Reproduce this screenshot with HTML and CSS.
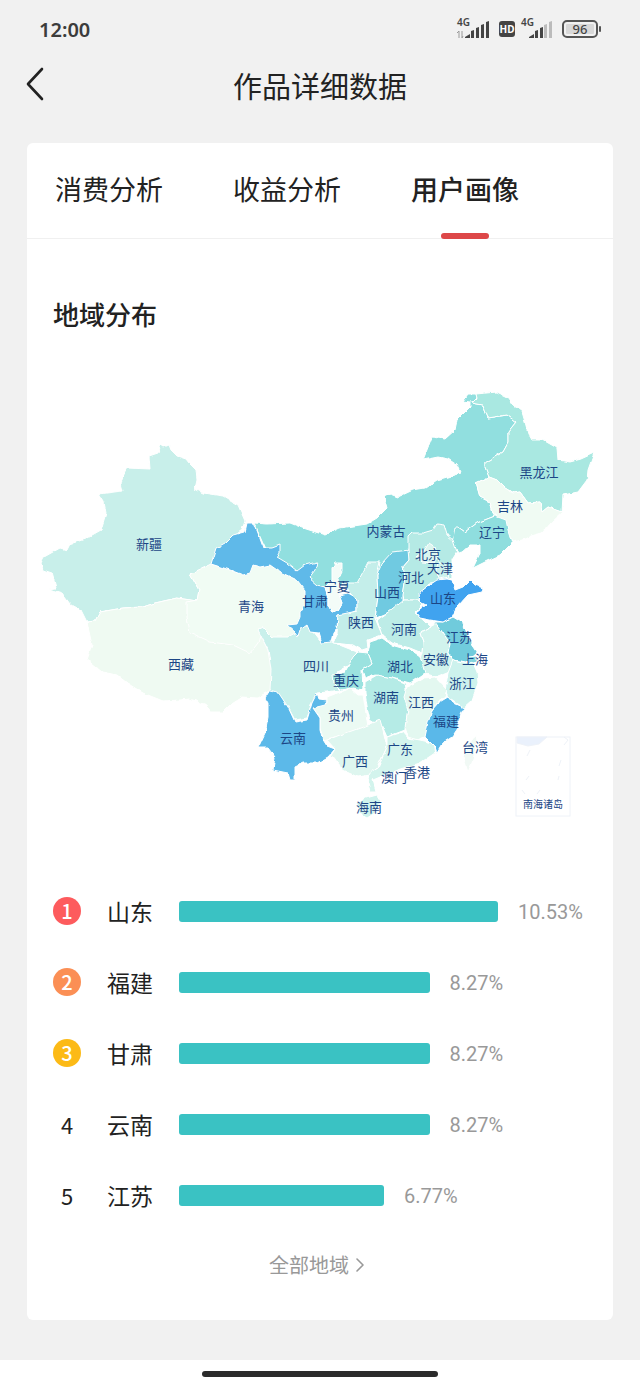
FILE: index.html
```
<!DOCTYPE html>
<html lang="zh-CN">
<head>
    <meta charset="UTF-8">
    <meta name="viewport" content="width=device-width, initial-scale=1.0">
    <title>作品详细数据</title>
    <link rel="stylesheet" href="styles.css">
</head>
<body>
    <div class="status-bar">
        <span class="time">12:00</span>
        <svg class="status-icons" viewBox="0 0 150 28" role="img" aria-label="信号与电量">
            <g class="status-text">
                <text x="1" y="11" font-size="10">4G</text>
                <text x="65" y="11" font-size="10">4G</text>
            </g>
            <path d="M3 23v-7l-2 2M6 16v7l1-2" fill="none" stroke="#999" stroke-width="1"/>
            <path d="M9 23v-1l5-3v4zM15 23v-7l3-1v8zM20 23V13l3-1v11zM25 23v-13l3-1v14zM30 23V7l3-1v17z" fill="#444"/>
            <rect x="43" y="6" width="16" height="16" rx="3" fill="#444"/>
            <text class="hd" x="51" y="18" font-size="10" text-anchor="middle">HD</text>
            <path d="M73 23v-1l5-3v4zM79 23v-7l3-1v8zM84 23V13l3-1v11z" fill="#444"/>
            <path d="M88 23v-13l3-1v14zM93 23V7l3-1v17z" fill="#bbb"/>
            <rect x="107" y="6" width="34" height="16" rx="4" fill="none" stroke="#555" stroke-width="2"/>
            <rect x="110" y="9" width="28" height="10" rx="1" fill="#d8d8d8"/>
            <rect x="143" y="11" width="2" height="6" rx="1" fill="#555"/>
            <text class="battery" x="124" y="19" font-size="13" text-anchor="middle">96</text>
        </svg>
    </div>

    <header class="page-header">
        <button class="back-button" type="button" aria-label="返回">
            <svg viewBox="0 0 20 34"><path d="M17 2 3 17l14 15" fill="none" stroke="#222" stroke-width="2.6" stroke-linecap="round" stroke-linejoin="round"/></svg>
        </button>
        <h1>作品详细数据</h1>
    </header>

    <main class="card">
        <nav class="tabs">
            <button class="tab-button" type="button">消费分析</button>
            <button class="tab-button" type="button">收益分析</button>
            <button class="tab-button active" type="button">用户画像</button>
        </nav>

        <section class="region-section">
            <h2>地域分布</h2>

            <svg class="region-map" viewBox="27 380 586 450" role="img" aria-label="地域分布地图">
                <defs>
                    <!-- roughens the borders a little -->
                    <filter id="rough" x="-2%" y="-2%" width="104%" height="104%">
                        <feTurbulence type="fractalNoise" baseFrequency="0.16" numOctaves="1" seed="4"/>
                        <feDisplacementMap in="SourceGraphic" scale="4" xChannelSelector="R" yChannelSelector="G" result="rough"/>
                        <feGaussianBlur in="rough" stdDeviation="0.35"/>
                    </filter>
                </defs>
                <g class="provinces" filter="url(#rough)">
                    <!-- 内蒙古 -->
                    <path fill="#91dfdf" d="M254 523 267 524 290 523 303 528 325 535 340 528 367 524 377 518 387 508 384 497 390 494 398 497 413 490 425 488 437 480 461 473 457 465 448 459 438 457 423 460 432 437 445 439 455 430 457 420 470 407 470 402 463 401 468 394 476 394 477 398 472 403 483 405 488 418 507 415 516 422 508 432 508 443 503 452 485 463 485 467 489 477 476 483 480 497 490 502 493 513 495 516 477 523 465 532 458 527 453 540 444 550 410 560 390 570 370 575 357 585 343 585 325 590 305 580 287 566 275 557 265 548Z"/>
                    <!-- 黑龙江 -->
                    <path fill="#a9e8e1" d="M476 394 497 392 507 397 513 405 522 412 525 422 528 433 532 440 543 440 557 448 558 460 570 462 581 459 594 453 588 470 587 480 578 492 563 495 562 512 548 507 542 512 540 502 528 503 520 492 513 493 505 488 497 480 489 477 485 467 485 463 503 452 508 443 508 432 516 422 507 415 488 418 483 405 472 403 477 398Z"/>
                    <!-- 吉林 -->
                    <path fill="#f0fbf3" d="M476 483 489 477 497 480 505 488 513 493 520 492 528 503 540 502 542 512 548 507 563 512 552 522 542 533 531 536 522 540 512 542 508 530 498 517 493 513 490 502 480 497Z"/>
                    <!-- 辽宁 -->
                    <path fill="#8fdede" d="M495 516 506 520 508 530 512 543 500 555 485 562 473 568 480 553 480 545 470 545 462 552 458 553 452 543 455 527 458 527 465 532 477 523Z"/>
                    <!-- 新疆 -->
                    <path fill="#c8efea" d="M161 445 164 447 169 445 171 450 177 456 186 459 189 463 196 470 197 480 195 489 203 493 223 496 238 505 245 521 242 530 233 537 225 545 217 548 211 565 190 574 199 590 197 601 177 598 155 603 143 607 123 608 100 612 95 621 87 622 81 610 70 604 62 593 49 589 56 588 52 573 43 570 41 563 44 557 60 548 67 550 70 544 85 539 101 530 106 513 104 502 99 494 122 491 120 483 127 468 150 469 149 456 158 453Z"/>
                    <!-- 西藏 -->
                    <path fill="#effaf2" d="M197 601 177 598 155 603 143 607 123 608 100 612 95 621 87 622 88 627 92 645 87 660 102 672 117 675 127 683 143 693 163 701 180 700 190 699 207 705 210 712 223 712 230 705 243 697 257 698 271 690 272 670 268 650 258 630 240 625Z"/>
                    <!-- 青海 -->
                    <path fill="#f1fcf4" d="M211 564 190 574 199 590 197 601 187 603 187 617 190 633 210 642 233 645 250 653 258 643 262 627 270 637 283 643 292 643 300 632 307 620 305 590 297 580 280 572 270 565 253 565 243 575 230 570Z"/>
                    <!-- 四川 -->
                    <path fill="#c9f0eb" d="M258 630 263 628 272 637 288 637 295 633 302 625 310 627 320 640 332 642 357 652 352 663 337 672 333 683 340 690 327 692 317 693 312 703 307 718 295 720 288 707 278 693 270 690 271 670 268 650Z"/>
                    <!-- 甘肃 -->
                    <path fill="#5fb9e9" d="M211 564 216 548 225 543 233 535 244 532 246 523 254 523 258 533 263 547 272 547 280 544 280 552 277 557 287 563 297 571 305 565 317 562 315 570 309 578 317 585 325 587 328 597 328 605 332 612 338 610 342 603 339 595 348 593 357 598 357 610 347 615 338 615 337 628 333 633 331 642 322 643 319 633 310 632 307 625 300 630 298 636 295 632 287 625 297 624 300 617 300 612 305 605 305 590 297 580 280 572 270 565 260 567 253 565 250 573 243 575 230 570Z"/>
                    <!-- 宁夏 -->
                    <path fill="#f3fcf8" d="M335 563 342 563 342 572 338 580 341 590 339 595 342 603 338 610 332 612 328 605 328 597 325 587 332 580 332 568Z"/>
                    <!-- 陕西 -->
                    <path fill="#c4eeea" d="M368 562 380 562 377 575 378 597 375 618 382 635 367 640 368 648 362 650 353 645 333 643 337 635 338 615 357 611 357 600 350 593 342 583 357 583 363 572Z"/>
                    <!-- 山西 -->
                    <path fill="#70cae1" d="M410 550 392 552 382 563 377 575 378 597 375 618 387 613 402 605 402 597 405 577 403 567 409 560Z"/>
                    <!-- 河北 -->
                    <path fill="#b5eae5" d="M408 550 408 537 412 533 423 533 433 530 437 524 444 525 447 535 453 540 457 552 452 560 452 577 437 582 430 583 420 593 419 600 403 600 402 595 405 577 403 567 409 560Z"/>
                    <!-- 北京 -->
                    <path fill="#dcf6f0" d="M429 543 435 547 438 556 434 563 422 562 417 556 424 551Z"/>
                    <!-- 天津 -->
                    <path fill="#cdf2ed" d="M439 560 446 566 449 577 439 579 436 570Z"/>
                    <!-- 河南 -->
                    <path fill="#bdece7" d="M403 600 418 600 423 605 415 613 423 620 430 627 420 633 423 642 422 653 410 648 392 643 382 635 377 620 387 613Z"/>
                    <!-- 安徽 -->
                    <path fill="#d1f3ed" d="M430 627 437 623 443 633 450 643 448 653 453 662 453 670 447 673 437 677 423 673 420 660 422 653 423 642 420 633Z"/>
                    <!-- 江苏 -->
                    <path fill="#70cbdc" d="M435 622 443 622 453 617 463 623 468 636 473 647 477 653 467 662 453 660 448 653 450 643 443 633Z"/>
                    <!-- 山东 -->
                    <path fill="#3fa3ef" d="M420 602 419 593 428 586 437 580 447 579 452 580 455 590 463 587 470 580 475 585 483 588 482 592 468 595 457 607 452 617 443 622 430 620 420 618 416 613 426 605Z"/>
                    <!-- 浙江 -->
                    <path fill="#cdf2ed" d="M453 660 462 662 473 663 477 672 478 683 472 700 463 708 448 698 445 690 448 673Z"/>
                    <!-- 上海 -->
                    <path fill="#83d4de" d="M468 657 477 656 477 662 469 664Z"/>
                    <!-- 湖北 -->
                    <path fill="#8fdedd" d="M370 642 382 638 392 645 410 650 420 657 425 673 410 683 392 678 375 675 365 679 362 670 372 663 368 653Z"/>
                    <!-- 重庆 -->
                    <path fill="#9be2df" d="M368 653 372 663 362 670 363 690 353 688 340 690 333 683 332 675 345 672 353 657 358 652Z"/>
                    <!-- 湖南 -->
                    <path fill="#b5ebe6" d="M365 682 377 675 392 678 405 683 407 695 408 710 405 730 387 737 383 728 370 720 368 712 365 693Z"/>
                    <!-- 江西 -->
                    <path fill="#e3f8f0" d="M407 687 423 678 435 677 447 690 445 697 438 702 432 710 425 737 417 740 408 737 405 727 408 710 404 697Z"/>
                    <!-- 贵州 -->
                    <path fill="#ebfaf3" d="M313 708 327 703 327 697 340 692 350 688 358 695 363 695 365 707 368 727 350 733 323 740 320 727 320 717Z"/>
                    <!-- 云南 -->
                    <path fill="#5cb9e9" d="M265 698 270 690 278 692 288 707 295 722 307 720 312 703 317 693 319 699 327 700 325 705 313 708 320 718 320 730 322 738 327 746 335 749 328 757 317 763 303 763 295 767 295 780 290 780 288 773 273 770 275 757 268 748 258 748 265 733 268 717 268 703Z"/>
                    <!-- 广西 -->
                    <path fill="#def6ef" d="M327 740 340 735 363 727 380 720 383 730 387 747 377 768 370 775 358 777 342 770 340 763 330 757 335 749Z"/>
                    <!-- 广东 -->
                    <path fill="#d3f4ed" d="M387 737 403 732 408 738 420 740 433 743 435 753 420 763 397 770 373 780 376 791 370 791 368 784 370 773 378 768 387 747Z"/>
                    <!-- 福建 -->
                    <path fill="#5ab8e9" d="M448 697 453 703 464 708 458 720 458 728 452 737 443 743 437 753 435 747 425 737 428 723 432 710 438 703Z"/>
                    <!-- 海南 -->
                    <path fill="#d0f3ed" d="M357 803 366 798 377 795 380 800 375 813 367 818 358 813Z"/>
                    <!-- 台湾 -->
                    <path fill="#f1f9f5" d="M477 735 478 741 472 763 468 772 463 757 468 743Z"/>
                </g>

                <!-- 南海诸岛 -->
                <g class="islands">
                    <rect x="516" y="737" width="54" height="79"/>
                    <path d="M517 737h30l-8 7-11 2-11-3z" fill="#eaf1fc"/>
                    <path d="M564 737l4 3-4 5M530 750l-3 6M529 776l-3 4M561 760l-2 6M559 776l-1 4M540 790l-3 4M522 790l3 4"/>
                </g>

                <g class="province-names">
                    <text x="149" y="549">新疆</text>
                    <text x="181" y="669">西藏</text>
                    <text x="251" y="611">青海</text>
                    <text x="315" y="606">甘肃</text>
                    <text x="337" y="591">宁夏</text>
                    <text x="386" y="536">内蒙古</text>
                    <text x="539" y="477">黑龙江</text>
                    <text x="510" y="511">吉林</text>
                    <text x="492" y="537">辽宁</text>
                    <text x="428" y="559">北京</text>
                    <text x="440" y="573">天津</text>
                    <text x="411" y="582">河北</text>
                    <text x="387" y="597">山西</text>
                    <text x="443" y="603">山东</text>
                    <text x="361" y="627">陕西</text>
                    <text x="404" y="634">河南</text>
                    <text x="459" y="642">江苏</text>
                    <text x="436" y="664">安徽</text>
                    <text x="475" y="664">上海</text>
                    <text x="316" y="671">四川</text>
                    <text x="400" y="671">湖北</text>
                    <text x="346" y="685">重庆</text>
                    <text x="462" y="688">浙江</text>
                    <text x="386" y="702">湖南</text>
                    <text x="421" y="707">江西</text>
                    <text x="341" y="720">贵州</text>
                    <text x="446" y="726">福建</text>
                    <text x="293" y="743">云南</text>
                    <text x="400" y="754">广东</text>
                    <text x="475" y="752">台湾</text>
                    <text x="355" y="766">广西</text>
                    <text x="394" y="782">澳门</text>
                    <text x="417" y="777">香港</text>
                    <text x="369" y="812">海南</text>
                    <text class="small" x="543" y="808">南海诸岛</text>
                </g>
            </svg>

            <ol class="rank-list">
                <li>
                    <span class="rank rank-1">1</span>
                    <span class="name">山东</span>
                    <div class="track"><div class="bar" style="width: 78.6%"></div><span class="value">10.53%</span></div>
                </li>
                <li>
                    <span class="rank rank-2">2</span>
                    <span class="name">福建</span>
                    <div class="track"><div class="bar" style="width: 61.7%"></div><span class="value">8.27%</span></div>
                </li>
                <li>
                    <span class="rank rank-3">3</span>
                    <span class="name">甘肃</span>
                    <div class="track"><div class="bar" style="width: 61.7%"></div><span class="value">8.27%</span></div>
                </li>
                <li>
                    <span class="rank">4</span>
                    <span class="name">云南</span>
                    <div class="track"><div class="bar" style="width: 61.7%"></div><span class="value">8.27%</span></div>
                </li>
                <li>
                    <span class="rank">5</span>
                    <span class="name">江苏</span>
                    <div class="track"><div class="bar" style="width: 50.5%"></div><span class="value">6.77%</span></div>
                </li>
            </ol>

            <a class="all-link" href="#">全部地域
                <svg viewBox="0 0 10 16"><path d="M2 2l6 6-6 6" fill="none" stroke="#999" stroke-width="1.6" stroke-linecap="round" stroke-linejoin="round"/></svg>
            </a>
        </section>
    </main>

    <footer class="home-bar">
        <div class="home-indicator"></div>
    </footer>
</body>
</html>
```
FILE: styles.css
```
* {
    box-sizing: border-box;
}

body {
    margin: 0;
    min-height: 100vh;
    display: flex;
    flex-direction: column;
    font-family: 'Noto Sans CJK SC', sans-serif;
    background-color: #f1f1f1;
    color: #222;
}

button {
    background-color: transparent;
    border: none;
    padding: 0;
    font-family: inherit;
    color: inherit;
    cursor: pointer;
}

.status-bar {
    display: flex;
    justify-content: space-between;
    align-items: center;
    height: 58px;
    padding: 0 34px 0 39px;
}

.time {
    font-family: 'Noto Sans', sans-serif;
    font-size: 20px;
    font-weight: 600;
    color: #3c3c3c;
}

.status-icons {
    width: 150px;
    height: 28px;
}

.status-icons text {
    font-family: 'Noto Sans', sans-serif;
    font-weight: 600;
    fill: #444;
}

.status-icons .battery {
    font-weight: 500;
}

.status-icons .hd {
    fill: #fff;
    font-weight: 700;
}

.page-header {
    display: grid;
    grid-template-columns: 20px 1fr 20px;
    align-items: center;
    height: 57px;
    margin-bottom: 28px;
    padding: 0 25px;
}

.back-button svg {
    display: block;
    width: 20px;
    height: 34px;
    margin-bottom: 6px;
}

h1 {
    margin: 0;
    padding-bottom: 4px;
    font-size: 29px;
    font-weight: 400;
    text-align: center;
}

.card {
    margin: 0 27px 40px;
    background-color: white;
    border-radius: 6px;
}

.tabs {
    display: flex;
    gap: 70px;
    height: 96px;
    padding: 0 28px;
    border-bottom: 1px solid #f0f0f0;
}

.tab-button {
    position: relative;
    padding-bottom: 4px;
    font-size: 27px;
}

.tab-button.active {
    font-weight: 500;
}

.tab-button.active::after {
    content: '';
    position: absolute;
    left: 50%;
    bottom: -1px;
    width: 48px;
    height: 6px;
    margin-left: -24px;
    border-radius: 3px;
    background-color: #dd4748;
}

h2 {
    margin: 55px 26px 46px;
    font-size: 26px;
    font-weight: 500;
    line-height: 40px;
}

.region-map {
    display: block;
    width: 100%;
}

.provinces path {
    stroke: white;
    stroke-width: 1;
    stroke-linejoin: round;
}

.province-names text {
    font-size: 13px;
    text-anchor: middle;
    fill: #1c4686;
}

.province-names .small {
    font-size: 10px;
}

.islands {
    fill: none;
    stroke: #eef2f8;
    stroke-width: 1;
}

.rank-list {
    list-style: none;
    margin: 0;
    padding: 46px 28px 0 26px;
}

.rank-list li {
    display: flex;
    align-items: center;
    height: 71px;
}

.rank {
    width: 28px;
    height: 28px;
    margin-bottom: 2px;
    border-radius: 50%;
    font-size: 22px;
    line-height: 28px;
    text-align: center;
}

.rank-1,
.rank-2,
.rank-3 {
    color: white;
    font-size: 20px;
    font-weight: 500;
}

.rank-1 {
    background-color: #fd5b5d;
}

.rank-2 {
    background-color: #fb8f55;
}

.rank-3 {
    background-color: #fcba16;
}

.name {
    width: 98px;
    margin-bottom: 2px;
    padding-left: 26px;
    font-size: 23px;
}

.track {
    flex: 1;
    display: flex;
    align-items: center;
    gap: 20px;
}

.bar {
    height: 21px;
    border-radius: 3px;
    background-color: #3ac2c3;
}

.value {
    font-family: Roboto, sans-serif;
    font-size: 20px;
    color: #999;
}

.all-link {
    display: flex;
    justify-content: center;
    align-items: center;
    gap: 6px;
    padding: 14px 6px 35px 0;
    font-size: 20px;
    line-height: 40px;
    color: #999;
    text-decoration: none;
}

.all-link svg {
    width: 10px;
    height: 16px;
}

.home-bar {
    flex: 1;
    display: flex;
    justify-content: center;
    align-items: center;
    min-height: 26px;
    background-color: white;
}

.home-indicator {
    width: 37%;
    height: 6px;
    border-radius: 3px;
    background-color: #2b2b2b;
}
```
